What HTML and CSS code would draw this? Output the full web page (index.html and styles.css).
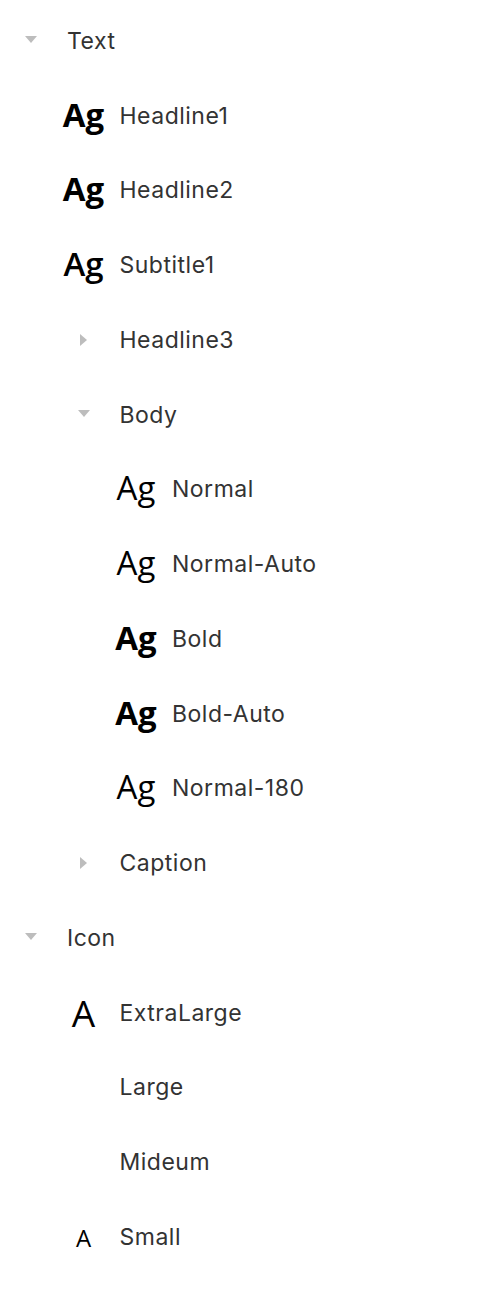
FILE: index.html
```html
<!DOCTYPE html>
<html>
<head>
<meta charset="utf-8">
<link rel="stylesheet" href="styles.css">
</head>
<body>
<ul class="tree">
  <li class="row l0"><span class="icon"><span class="tri down"></span></span><span class="label">Text</span></li>
  <li class="row l1"><span class="icon"><span class="ag w700">Ag</span></span><span class="label">Headline1</span></li>
  <li class="row l1"><span class="icon"><span class="ag w700">Ag</span></span><span class="label">Headline2</span></li>
  <li class="row l1"><span class="icon"><span class="ag w600">Ag</span></span><span class="label">Subtitle1</span></li>
  <li class="row l1"><span class="icon"><span class="tri right"></span></span><span class="label">Headline3</span></li>
  <li class="row l1"><span class="icon"><span class="tri down"></span></span><span class="label">Body</span></li>
  <li class="row l2"><span class="icon"><span class="ag w400">Ag</span></span><span class="label">Normal</span></li>
  <li class="row l2"><span class="icon"><span class="ag w400">Ag</span></span><span class="label">Normal-Auto</span></li>
  <li class="row l2"><span class="icon"><span class="ag w700">Ag</span></span><span class="label">Bold</span></li>
  <li class="row l2"><span class="icon"><span class="ag w700">Ag</span></span><span class="label">Bold-Auto</span></li>
  <li class="row l2"><span class="icon"><span class="ag w400">Ag</span></span><span class="label">Normal-180</span></li>
  <li class="row l1"><span class="icon"><span class="tri right"></span></span><span class="label">Caption</span></li>
  <li class="row l0"><span class="icon"><span class="tri down"></span></span><span class="label">Icon</span></li>
  <li class="row l1"><span class="icon"><span class="glyph xl">A</span></span><span class="label">ExtraLarge</span></li>
  <li class="row l1"><span class="icon"></span><span class="label">Large</span></li>
  <li class="row l1"><span class="icon"></span><span class="label">Mideum</span></li>
  <li class="row l1"><span class="icon"><span class="glyph sm">A</span></span><span class="label">Small</span></li>
</ul>
</body>
</html>
```
FILE: styles.css
```css
html, body {
  margin: 0;
  padding: 0;
  background: #ffffff;
}
.tree {
  list-style: none;
  margin: 0;
  padding: 3.6px 0 0 0;
}
.row {
  display: flex;
  align-items: center;
  height: 74.75px;
}
.l0 { padding-left: 0; }
.l1 { padding-left: 52.5px; }
.l2 { padding-left: 105px; }
.icon {
  width: 62px;
  height: 50px;
  flex: 0 0 62px;
  display: flex;
  align-items: center;
  justify-content: center;
}
.label {
  margin-left: 5px;
  font-family: Inter, "Liberation Sans", sans-serif;
  font-size: 23px;
  color: #333333;
  letter-spacing: 0.5px;
}
.tri {
  display: block;
  width: 0;
  height: 0;
}
.tri.down {
  border-left: 6px solid transparent;
  border-right: 6px solid transparent;
  border-top: 7px solid #bdbdbd;
  margin-top: -3px;
}
.tri.right {
  border-top: 6px solid transparent;
  border-bottom: 6px solid transparent;
  border-left: 7px solid #bdbdbd;
}
.ag {
  font-family: "Open Sans", "Noto Sans", sans-serif;
  font-size: 33px;
  line-height: 1;
  color: #000;
  margin-top: -3px;
}
.w700 { font-weight: 700; }
.w600 { font-weight: 600; }
.w400 { font-weight: 400; }
.glyph {
  font-family: "Open Sans", "Noto Sans", sans-serif;
  font-weight: 400;
  color: #000;
  line-height: 1;
}
.glyph.xl { font-size: 37px; }
.glyph.sm { font-size: 24px; margin-top: 2px; }
```
